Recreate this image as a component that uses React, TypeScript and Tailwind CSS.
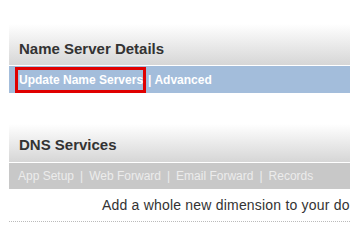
export default function App() {
    return (
        <div className="w-[350px] h-[247px] bg-white overflow-hidden font-['Liberation_Sans',Arial,sans-serif]">
            <div className="pl-[9px] pt-[24px]">
                <div className="h-[41px] bg-gradient-to-b from-white to-[#d6d6d6] flex items-end pb-[9px] pl-[10px]">
                    <h2 className="text-[15px] font-bold text-[#333] leading-none">Name Server Details</h2>
                </div>
                <div className="h-px bg-white" />
                <div className="h-[27px] bg-[#a3bddb] flex items-center text-[12px] font-bold text-white whitespace-nowrap">
                    <span className="ml-[6px] h-[26px] pl-[1px] flex items-center border-[3px] border-[#e00000]">Update Name Servers</span>
                    <span className="ml-[2px] mr-[3px]">|</span>
                    <span>Advanced</span>
                </div>
                <div className="h-[31px]" />
                <div className="h-[38px] bg-gradient-to-b from-white to-[#d6d6d6] flex items-end pb-[10px] pl-[10px]">
                    <h2 className="text-[15px] font-bold text-[#333] leading-none">DNS Services</h2>
                </div>
                <div className="h-px bg-white" />
                <div className="h-[26px] bg-[#c8c8c8] flex items-center pl-[9px] text-[12px] text-[#ececec] whitespace-nowrap">
                    App Setup <span className="mx-[6px]">|</span> Web Forward <span className="mx-[6px]">|</span> Email Forward <span className="mx-[6px]">|</span> Records
                </div>
                <div className="h-[32px] pl-[93px] flex items-center text-[14px] text-[#333] whitespace-nowrap tracking-[0.2px]">
                    Add a whole new dimension to your domain
                </div>
                <div className="border-b border-dotted border-[#bbb]" />
            </div>
        </div>
    )
}
